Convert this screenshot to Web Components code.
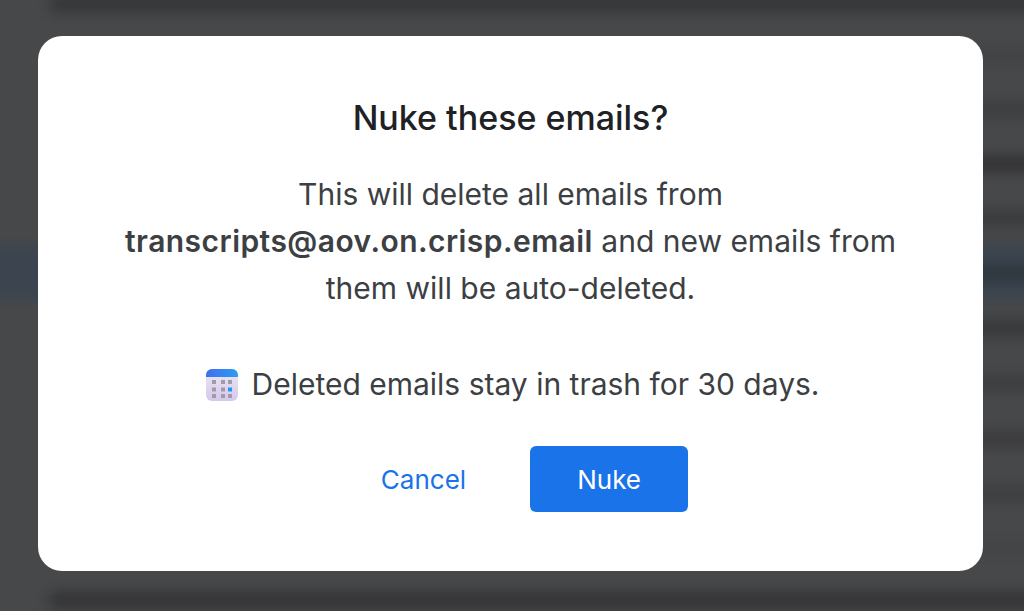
<!DOCTYPE html>
<html>
<head>
<meta charset="utf-8">
<style>
    html, body { margin: 0; height: 100%; background: #474849; overflow: hidden; }
    body { font-family: Inter, Roboto, "Liberation Sans", sans-serif; }
</style>
</head>
<body>
<mail-screen>
    <blurred-list slot="behind"></blurred-list>
    <confirm-dialog heading="Nuke these emails?">
        <p>This will delete all emails from<br><b>transcripts@aov.on.crisp.email</b> and new emails from<br>them will be auto-deleted.</p>
        <trash-note>Deleted emails stay in trash for 30 days.</trash-note>
        <dialog-button slot="actions">Cancel</dialog-button>
        <dialog-button slot="actions" primary>Nuke</dialog-button>
    </confirm-dialog>
</mail-screen>
<script>
customElements.define('mail-screen', class MailScreen extends HTMLElement {
    constructor() {
        super();
        this.attachShadow({ mode: 'open' }).innerHTML = `
            <style>
                :host { display: grid; grid-template: 611px / 1024px; width: 1024px; height: 611px; overflow: hidden; }
                ::slotted(*) { grid-area: 1 / 1; }
            </style>
            <slot name="behind"></slot>
            <slot></slot>
        `;
    }
});

customElements.define('blurred-list', class BlurredList extends HTMLElement {
    // tone of each message row, how dark its text smear is, and its height
    static #rows = [
        ['#474849', 0.55, 48], ['#474849', 0.12, 54], ['#474849', 0.3, 55], ['#474849', 0.6, 54],
        ['#474849', 0.4, 54], ['#3b444f', 0.5, 55], ['#474849', 0.5, 55], ['#474849', 0.3, 56],
        ['#474849', 0.35, 55], ['#474849', 0.28, 55], ['#474849', 0.1, 54], ['#474849', 0.6, 50],
    ];
    constructor() {
        super();
        const rows = BlurredList.#rows.map(([bg, ink, h]) => `
            <div class="row" style="height:${h}px;background:${bg}">
                <span style="background:rgba(36,37,39,${ink})"></span>
            </div>`).join('');
        this.attachShadow({ mode: 'open' }).innerHTML = `
            <style>
                :host { display: block; overflow: hidden; filter: blur(7px); margin: -20px -30px 0 -30px; }
                .row { display: flex; align-items: center; padding-left: 80px; }
                span { display: block; flex: 1; height: 16px; }
            </style>
            ${rows}
        `;
    }
});

customElements.define('confirm-dialog', class ConfirmDialog extends HTMLElement {
    constructor() {
        super();
        this.attachShadow({ mode: 'open' }).innerHTML = `
            <style>
                :host {
                    display: flex; flex-direction: column; align-items: center; z-index: 1;
                    box-sizing: border-box; align-self: start;
                    width: 945px; height: 535px; margin: 36px 0 0 38px; padding-top: 60px;
                    background: #fff; border-radius: 24px; text-align: center;
                    color: #3c4043;
                }
                h2 { margin: 0 0 31px; font: 500 34px/44px Inter, Roboto, sans-serif; color: #202124; }
                .body { font-size: 30px; line-height: 47px; }
                ::slotted(p) { margin: 0 0 49px; }
                .actions { display: flex; align-items: center; gap: 64px; margin-top: 38px; }
            </style>
            <h2></h2>
            <div class="body"><slot></slot></div>
            <div class="actions"><slot name="actions"></slot></div>
        `;
        this.shadowRoot.querySelector('h2').textContent = this.getAttribute('heading');
    }
});

customElements.define('trash-note', class TrashNote extends HTMLElement {
    constructor() {
        super();
        this.attachShadow({ mode: 'open' }).innerHTML = `
            <style>
                :host { display: flex; align-items: center; justify-content: center; gap: 14px; padding-left: 4px; }
                svg { display: block; width: 32px; height: 32px; }
            </style>
            <svg viewBox="0 0 32 32">
                <defs>
                    <linearGradient id="page" x1="0" y1="0" x2="0" y2="1">
                        <stop offset="0" stop-color="#ece8f2"/>
                        <stop offset="1" stop-color="#d6c7ec"/>
                    </linearGradient>
                    <linearGradient id="band" x1="0" y1="0" x2="1" y2="0">
                        <stop offset="0" stop-color="#3f6fee"/>
                        <stop offset="1" stop-color="#2f9bf5"/>
                    </linearGradient>
                </defs>
                <rect width="32" height="32" rx="6" fill="url(#page)"/>
                <path d="M0 8V6a6 6 0 0 1 6-6h20a6 6 0 0 1 6 6v2z" fill="url(#band)"/>
                <g fill="#a09ba8">
                    <rect x="6" y="11" width="4" height="4"/><rect x="15" y="11" width="4" height="4"/><rect x="22" y="11" width="4" height="4"/>
                    <rect x="6" y="18.5" width="4" height="4"/><rect x="15" y="18.5" width="4" height="4"/>
                    <rect x="6" y="25" width="4" height="4"/><rect x="15" y="25" width="4" height="4"/><rect x="22" y="25" width="4" height="4"/>
                </g>
                <rect x="22" y="18.5" width="4" height="4" fill="#2196f3"/>
            </svg>
            <span><slot></slot></span>
        `;
    }
});

customElements.define('dialog-button', class DialogButton extends HTMLElement {
    constructor() {
        super();
        this.attachShadow({ mode: 'open' }).innerHTML = `
            <style>
                :host {
                    display: flex; align-items: center; justify-content: center;
                    height: 66px; padding-left: 48px; font-size: 26px; color: #1a73e8; border-radius: 6px;
                }
                :host([primary]) { width: 158px; padding-left: 0; background: #1a73e8; color: #fff; }
            </style>
            <slot></slot>
        `;
    }
});

// light-DOM bold inside the dialog text: slightly wider tracking, like the reference
document.querySelector('confirm-dialog b').style.cssText = 'font-weight:600;letter-spacing:.45px';
</script>
</body>
</html>
